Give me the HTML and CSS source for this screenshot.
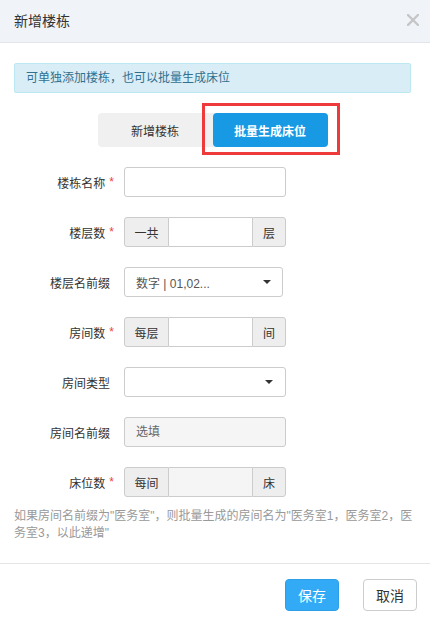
FILE: index.html
```html
<!DOCTYPE html>
<html lang="zh-CN">
<head>
    <meta charset="UTF-8">
    <meta name="viewport" content="width=device-width, initial-scale=1.0">
    <title>新增楼栋</title>
    <link rel="stylesheet" href="styles.css">
</head>
<body>
    <div class="modal">
        <div class="modal-header">
            <h4 class="modal-title">新增楼栋</h4>
            <button class="close" type="button">
                <svg width="12" height="12" viewBox="0 0 12 12"><path d="M1 1L11 11M11 1L1 11" stroke="#c6c6c6" stroke-width="2.4" stroke-linecap="square"/></svg>
            </button>
        </div>

        <div class="modal-body">
            <div class="alert">可单独添加楼栋，也可以批量生成床位</div>

            <div class="tabs">
                <button class="tab">新增楼栋</button>
                <button class="tab tab-active">批量生成床位<span class="mark"></span></button>
            </div>

            <div class="form">
                <div class="form-row">
                    <label class="form-label">楼栋名称<span class="req">*</span></label>
                    <input class="form-control" type="text">
                </div>
                <div class="form-row">
                    <label class="form-label">楼层数<span class="req">*</span></label>
                    <div class="input-group">
                        <span class="addon addon-left">一共</span>
                        <input class="group-input" type="text">
                        <span class="addon addon-right">层</span>
                    </div>
                </div>
                <div class="form-row">
                    <label class="form-label">楼层名前缀</label>
                    <div class="select select-short">数字 | 01,02...<span class="caret"></span></div>
                </div>
                <div class="form-row">
                    <label class="form-label">房间数<span class="req">*</span></label>
                    <div class="input-group">
                        <span class="addon addon-left">每层</span>
                        <input class="group-input" type="text">
                        <span class="addon addon-right">间</span>
                    </div>
                </div>
                <div class="form-row">
                    <label class="form-label">房间类型</label>
                    <div class="select"><span class="caret"></span></div>
                </div>
                <div class="form-row">
                    <label class="form-label">房间名前缀</label>
                    <input class="form-control form-muted" type="text" placeholder="选填">
                </div>
                <div class="form-row">
                    <label class="form-label">床位数<span class="req">*</span></label>
                    <div class="input-group">
                        <span class="addon addon-left">每间</span>
                        <input class="group-input form-muted" type="text">
                        <span class="addon addon-right">床</span>
                    </div>
                </div>
            </div>

            <p class="help">如果房间名前缀为"医务室"，则批量生成的房间名为"医务室1，医务室2，医务室3，以此递增"</p>
        </div>

        <div class="modal-footer">
            <button class="btn btn-primary">保存</button>
            <button class="btn btn-default">取消</button>
        </div>
    </div>
</body>
</html>
```

FILE: styles.css
```css
* {
    margin: 0;
    padding: 0;
    box-sizing: border-box;
}

body {
    font-family: 'Liberation Sans', 'Noto Sans CJK SC', sans-serif;
    font-size: 12px;
    color: #333;
    background: white;
}

button,
input {
    font-family: inherit;
    font-size: inherit;
}

.modal {
    width: 430px;
    min-height: 618px;
    background: white;
}

.modal-header {
    display: flex;
    justify-content: space-between;
    align-items: center;
    height: 43px;
    padding: 0 11px 0 14px;
    background: #f0f4f9;
    border-bottom: 1px solid #e1e4e8;
}

.modal-title {
    font-size: 14px;
    font-weight: normal;
    line-height: 20px;
    color: #333;
    margin-top: -1px;
}

.close {
    border: none;
    background: none;
    width: 12px;
    height: 12px;
    display: flex;
    margin-top: -2px;
}

.modal-body {
    padding: 20px 19px 0 14px;
}

.alert {
    height: 30px;
    padding: 0 11px;
    line-height: 28px;
    color: #31708f;
    background: #d9edf7;
    border: 1px solid #bce8f1;
    border-radius: 2px;
}

.tabs {
    display: flex;
    width: 230px;
    margin: 20px auto 0;
    background: #f0f0f0;
    border-radius: 4px;
}

.tab {
    position: relative;
    flex: 1;
    height: 34px;
    border: none;
    border-radius: 4px;
    background: none;
    color: #333;
}

.tab-active {
    background: #1799e4;
    color: white;
    font-weight: bold;
}

/* red annotation frame around the active tab */
.mark {
    position: absolute;
    left: -11px;
    top: -10px;
    width: 138px;
    height: 52px;
    border: 3px solid #ee3a3a;
}

.form {
    display: flex;
    flex-direction: column;
    gap: 20px;
    margin-top: 20px;
}

.form-row {
    display: flex;
    align-items: center;
    gap: 14px;
    height: 30px;
}

.form-label {
    width: 96px;
    text-align: right;
    color: #333;
}

.req {
    color: #f0413c;
    margin-left: 4px;
    margin-right: -4px;
    position: relative;
    top: -2px;
}

.form-control {
    width: 162px;
    height: 30px;
    border: 1px solid #ccc;
    border-radius: 3px;
    padding: 0 11px;
    color: #555;
    outline: none;
}

.form-muted {
    background: #f5f5f5;
}

.form-control::placeholder {
    color: #666;
}

.input-group {
    display: flex;
    width: 162px;
    height: 30px;
}

.addon {
    display: flex;
    align-items: center;
    justify-content: center;
    background: #eee;
    border: 1px solid #ccc;
    color: #333;
}

.addon-left {
    width: 45px;
    border-radius: 3px 0 0 3px;
}

.addon-right {
    width: 34px;
    border-radius: 0 3px 3px 0;
}

.group-input {
    flex: 1;
    min-width: 0;
    border: 1px solid #ccc;
    border-left: none;
    border-right: none;
    outline: none;
}

.select {
    display: flex;
    align-items: center;
    justify-content: space-between;
    width: 162px;
    height: 30px;
    padding: 0 12px 0 11px;
    border: 1px solid #ccc;
    border-radius: 3px;
    color: #555;
}

.select-short {
    width: 159px;
    padding-right: 11px;
}

.select:not(.select-short) {
    justify-content: flex-end;
}

.caret {
    width: 0;
    height: 0;
    border-left: 4px solid transparent;
    border-right: 4px solid transparent;
    border-top: 4px solid #333;
}

.help {
    margin-top: 11px;
    margin-right: -6px;
    line-height: 17px;
    color: #999;
}

.modal-footer {
    display: flex;
    justify-content: flex-end;
    gap: 24px;
    margin-top: 21px;
    padding: 15px 13px 15px 0;
    border-top: 1px solid #e5e5e5;
}

.btn {
    width: 54px;
    height: 32px;
    border-radius: 4px;
    font-size: 14px;
}

.btn-primary {
    background: #33aaf6;
    border: 1px solid #2e9fe6;
    color: white;
}

.btn-default {
    background: white;
    border: 1px solid #ccc;
    color: #333;
}
```
